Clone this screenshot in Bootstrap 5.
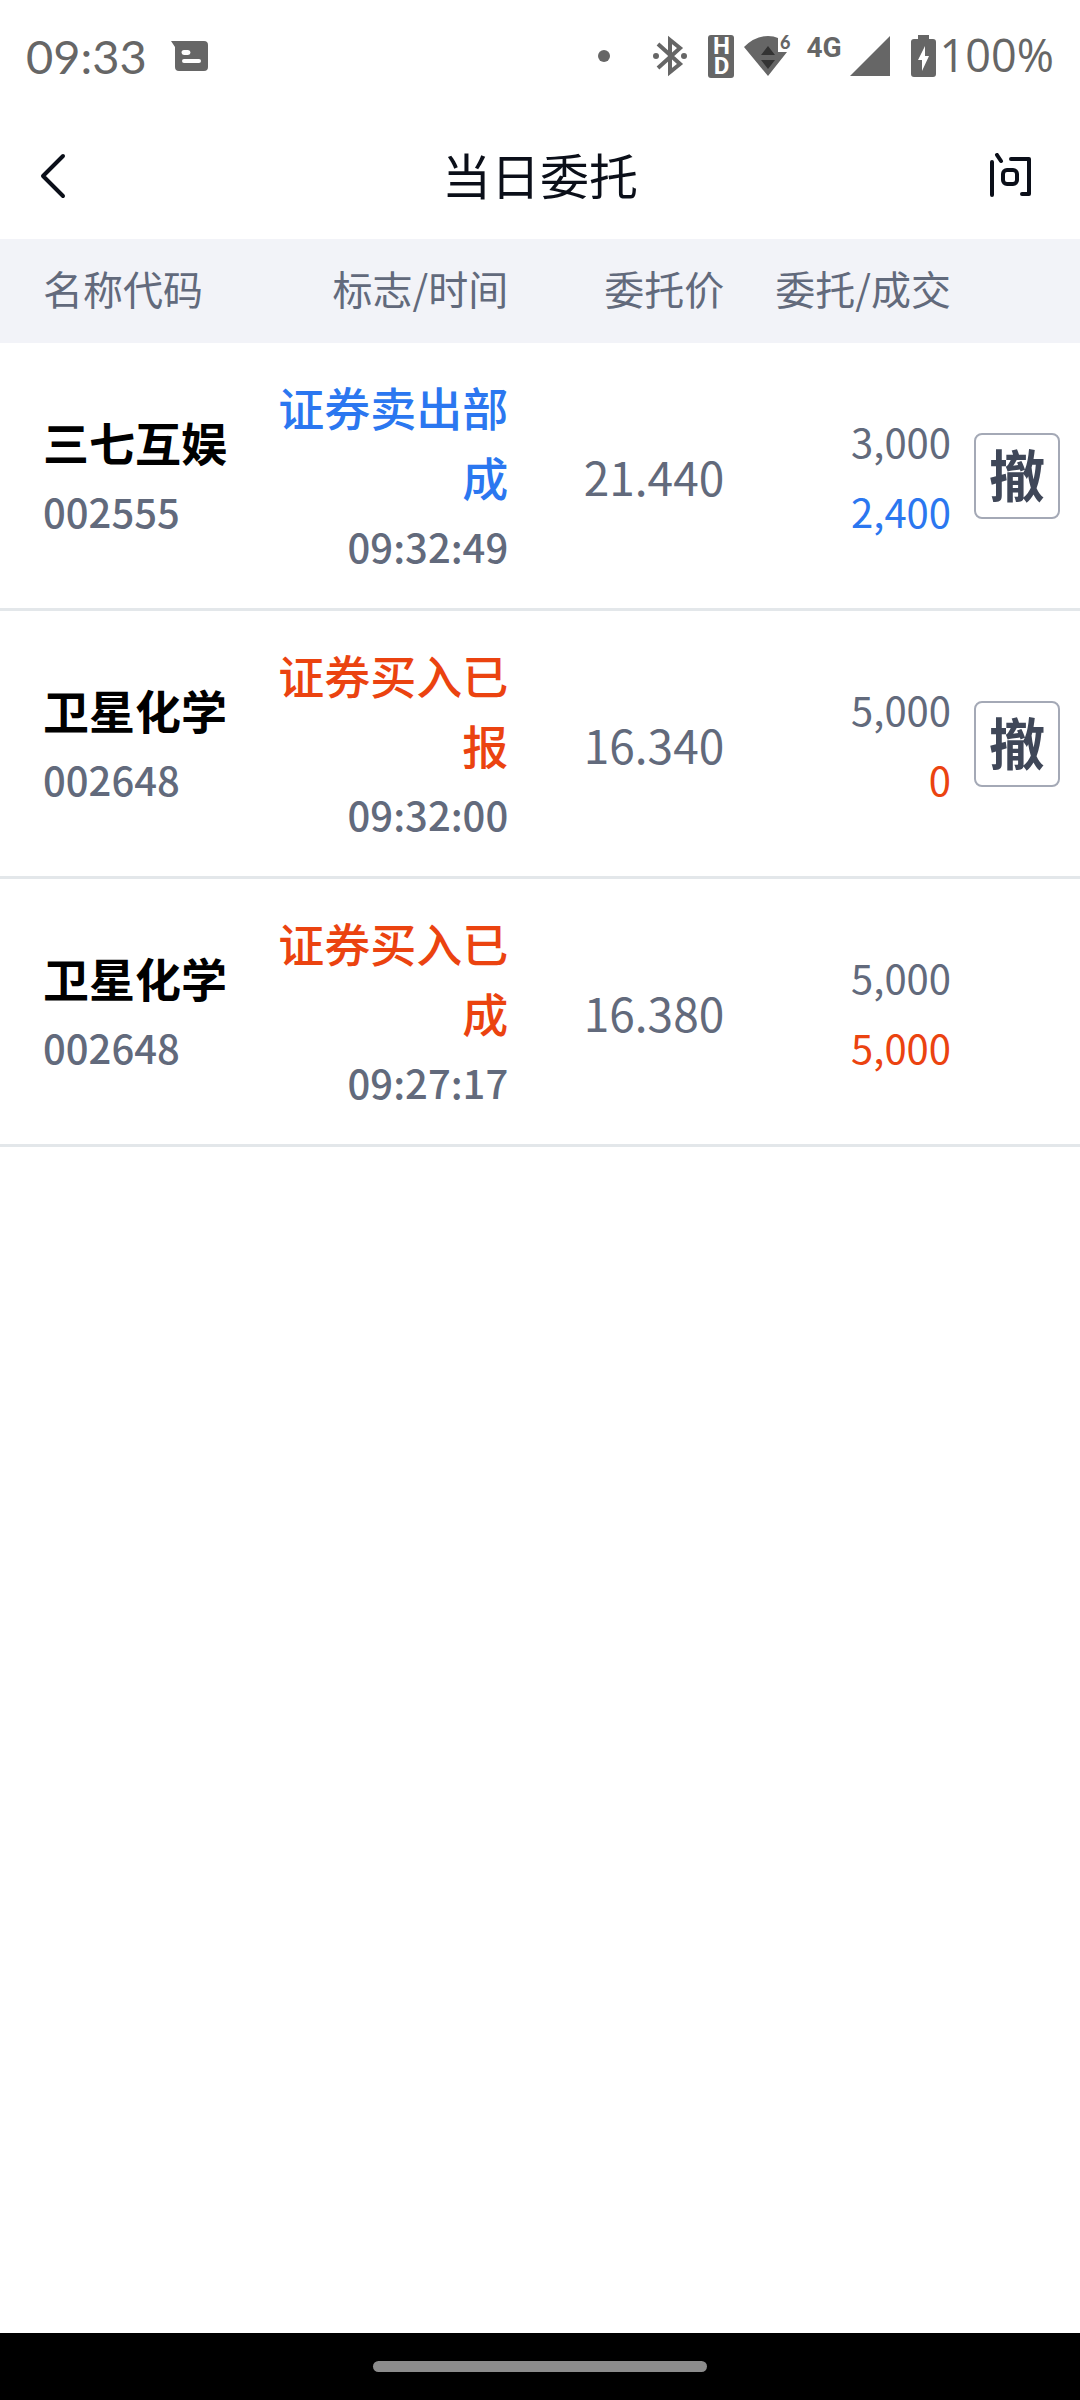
<!DOCTYPE html>
<html lang="zh-CN">
<head>
<meta charset="utf-8">
<meta name="viewport" content="width=device-width, initial-scale=1">
<title>当日委托</title>
<link href="https://cdn.jsdelivr.net/npm/bootstrap@5.3.0/dist/css/bootstrap.min.css" rel="stylesheet">
<style>
  body { font-family: "Noto Sans CJK SC", sans-serif; color: #0b0f19; }
  .status-bar { height: 112px; padding: 0 26px; color: #666; font-family: Lato, sans-serif; font-size: 47px; line-height: 56px; }
  .status-bar svg { display: block; fill: currentColor; overflow: visible; }
  .battery-level { font-family: "Open Sans", sans-serif; font-size: 45px; padding-bottom: 2px; }
  .net-type { font-family: Roboto, sans-serif; font-size: 28px; line-height: 40px; font-weight: 700; height: 40px; margin-top: -16px; }
  .hd-tag { width: 26px; height: 43px; padding-top: 1px; border-radius: 3px; background: #666; color: #fff; font-family: Roboto, sans-serif; font-size: 24px; line-height: 20px; font-weight: 700; word-break: break-all; text-align: center; }
  .gap-wide { margin-left: 43px; }
  .gap-mid { margin-left: 21px; }
  .gap-slim { margin-left: 10px; }
  .title-bar { height: 127px; padding: 0 40px; }
  .title-bar h1 { font-size: 49px; line-height: 72px; font-weight: 400; padding-bottom: 4px; }
  .icon-btn { line-height: 1; color: #0b0f19; }
  .icon-btn svg { display: block; fill: none; stroke: currentColor; stroke-width: 4; stroke-linecap: round; stroke-linejoin: round; }
  .orders { table-layout: fixed; color: #626a7c; }
  .orders th, .orders td { padding: 0; border: 0; color: inherit; background: none; }
  .orders thead th { height: 104px; padding-bottom: 6px; font-size: 40px; line-height: 60px; font-weight: 400; vertical-align: middle; background: #f2f3f8; }
  .orders tbody tr { border-bottom: 3px solid #e3e7ea; }
  .orders tbody td { padding: 28px 0 27px; font-size: 40px; line-height: 70px; }
  .orders tr > :first-child { padding-left: 43px; }
  .col-flag { width: 23%; }
  .col-price { width: 20%; }
  .col-qty { width: 21%; }
  .col-act { width: 129px; }
  .stock-name, .order-flag { font-size: 46px; }
  .stock-name { font-weight: 700; color: #000; }
  .semi { font-weight: 500; }
  .orders tbody td.price { font-size: 46px; }
  .sell { color: #2b77f0; }
  .buy { color: #eb4310; }
  .cancel-btn { width: 86px; height: 86px; padding: 0 0 6px; margin-right: 20px; border: 2px solid #a4a9b6; border-radius: 8px; background: #fff; color: #3f4758; font-size: 56px; line-height: 76px; font-weight: 700; }
  .gesture-bar { height: 67px; background: #000; }
  .gesture-pill { width: 31%; height: 11px; background: #8c8c8c; }
</style>
</head>
<body class="bg-white">
<div class="d-flex flex-column min-vh-100">
  <div class="status-bar d-flex align-items-center justify-content-between">
    <div class="d-flex align-items-center gap-4">
      <span>09:33</span>
      <svg width="37" height="30" viewBox="0 0 37 30"><path fill-rule="evenodd" d="M0 0H33Q37 0 37 4V26Q37 30 33 30H8Q4 30 4 26V6ZM13 9a2 2 0 0 0 0 5h4a2 2 0 0 0 0-5ZM13 18a2 2 0 0 0 0 4h15a2 2 0 0 0 0-4Z"/></svg>
    </div>
    <div class="d-flex align-items-center">
      <svg width="12" height="12" viewBox="0 0 12 12"><circle cx="6" cy="6" r="6"/></svg>
      <svg class="gap-wide" width="34" height="38" viewBox="0 0 34 38"><path d="M5 7 27 27 17 35V3L27 11 5 31" fill="none" stroke="currentColor" stroke-width="4"/><circle cx="3" cy="19" r="3"/><circle cx="31" cy="19" r="3"/></svg>
      <div class="hd-tag gap-mid">HD</div>
      <svg class="gap-slim" width="46" height="40" viewBox="0 0 46 40"><path d="M0 11Q11 0 24 0 30 0 34 2V16H43L24 40Z"/><path fill="#333" d="M17 19 24 10 31 19ZM17 24H31L24 33Z"/><text x="36" y="13" font-family="Lato, sans-serif" font-weight="900" font-size="18">6</text></svg>
      <span class="net-type ms-3">4G</span>
      <svg class="ms-2" width="40" height="40" viewBox="0 0 40 40"><path d="M40 0V40H0Z"/></svg>
      <svg class="gap-mid" width="25" height="42" viewBox="0 0 25 42"><path fill-rule="evenodd" d="M7 0H18V4H22Q25 4 25 7V39Q25 42 22 42H3Q0 42 0 39V7Q0 4 3 4H7ZM14 11 7 25H11V36L18 21H14Z"/></svg>
      <span class="battery-level ms-1">100%</span>
    </div>
  </div>

  <header class="title-bar d-flex align-items-center justify-content-between">
    <button type="button" class="icon-btn btn border-0 p-0" aria-label="返回"><svg width="52" height="46" viewBox="0 0 52 46"><path d="M23 3 3 23 23 43"/></svg></button>
    <h1 class="mb-0">当日委托</h1>
    <button type="button" class="icon-btn btn border-0 p-0" aria-label="问"><svg width="52" height="46" viewBox="0 0 52 46"><path d="M4 9V42M9 2 13 8M23 6H41V41H34"/><rect x="15" y="17" width="14" height="14" rx="4"/></svg></button>
  </header>

  <main class="flex-grow-1">
    <table class="orders table mb-0 align-middle">
      <thead>
        <tr>
          <th class="col-name" scope="col">名称代码</th>
          <th class="col-flag text-end" scope="col">标志/时间</th>
          <th class="col-price text-end" scope="col">委托价</th>
          <th class="col-qty text-end" scope="col">委托/成交</th>
          <th class="col-act"></th>
        </tr>
      </thead>
      <tbody>
        <tr>
          <td><div class="stock-name">三七互娱</div><div class="semi">002555</div></td>
          <td class="text-end semi"><div class="order-flag sell">证券卖出部成</div><div>09:32:49</div></td>
          <td class="price text-end">21.440</td>
          <td class="text-end"><div>3,000</div><div class="sell">2,400</div></td>
          <td class="text-end"><button type="button" class="cancel-btn btn">撤</button></td>
        </tr>
        <tr>
          <td><div class="stock-name">卫星化学</div><div class="semi">002648</div></td>
          <td class="text-end semi"><div class="order-flag buy">证券买入已报</div><div>09:32:00</div></td>
          <td class="price text-end">16.340</td>
          <td class="text-end"><div>5,000</div><div class="buy">0</div></td>
          <td class="text-end"><button type="button" class="cancel-btn btn">撤</button></td>
        </tr>
        <tr>
          <td><div class="stock-name">卫星化学</div><div class="semi">002648</div></td>
          <td class="text-end semi"><div class="order-flag buy">证券买入已成</div><div>09:27:17</div></td>
          <td class="price text-end">16.380</td>
          <td class="text-end"><div>5,000</div><div class="buy">5,000</div></td>
          <td></td>
        </tr>
      </tbody>
    </table>
  </main>

  <footer class="gesture-bar d-flex align-items-center justify-content-center">
    <div class="gesture-pill rounded-pill"></div>
  </footer>
</div>
<script src="https://cdn.jsdelivr.net/npm/bootstrap@5.3.0/dist/js/bootstrap.bundle.min.js"></script>
</body>
</html>
